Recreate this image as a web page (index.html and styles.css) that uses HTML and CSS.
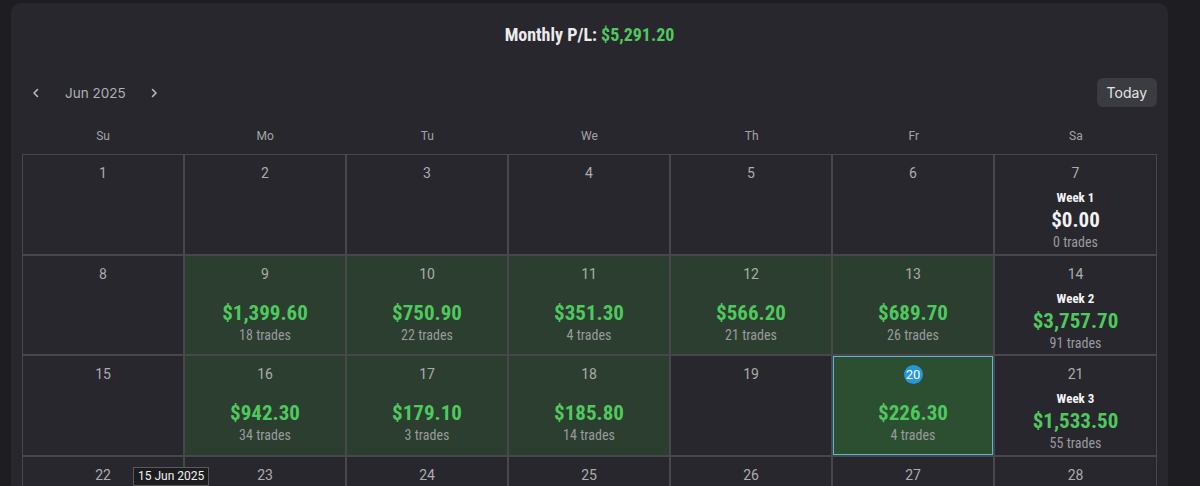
FILE: index.html
```html
<!DOCTYPE html>
<html lang="en">
<head>
    <meta charset="UTF-8">
    <meta name="viewport" content="width=device-width, initial-scale=1.0">
    <title>P/L Calendar</title>
    <link rel="stylesheet" href="styles.css">
</head>
<body>
    <div class="card">
        <h1 class="title">Monthly P/L: <span class="pos">$5,291.20</span></h1>

        <div class="nav">
            <div class="month-switch">
                <button class="arrow" aria-label="Previous month">
                    <svg width="14" height="14" viewBox="0 0 14 14"><path d="M8.5 3.5 5 7l3.5 3.5" fill="none" stroke="currentColor" stroke-width="1.6" stroke-linecap="round" stroke-linejoin="round"/></svg>
                </button>
                <span class="month">Jun 2025</span>
                <button class="arrow" aria-label="Next month">
                    <svg width="14" height="14" viewBox="0 0 14 14"><path d="M5.5 3.5 9 7l-3.5 3.5" fill="none" stroke="currentColor" stroke-width="1.6" stroke-linecap="round" stroke-linejoin="round"/></svg>
                </button>
            </div>
            <button class="today">Today</button>
        </div>

        <div class="weekdays">
            <div>Su</div><div>Mo</div><div>Tu</div><div>We</div><div>Th</div><div>Fr</div><div>Sa</div>
        </div>

        <div class="grid">
            <!-- week 1 -->
            <div class="day"><span class="num">1</span></div>
            <div class="day"><span class="num">2</span></div>
            <div class="day"><span class="num">3</span></div>
            <div class="day"><span class="num">4</span></div>
            <div class="day"><span class="num">5</span></div>
            <div class="day"><span class="num">6</span></div>
            <div class="day week">
                <span class="num">7</span>
                <span class="week-label">Week 1</span>
                <span class="amount zero">$0.00</span>
                <span class="trades">0 trades</span>
            </div>

            <!-- week 2 -->
            <div class="day"><span class="num">8</span></div>
            <div class="day win">
                <span class="num">9</span>
                <span class="amount">$1,399.60</span>
                <span class="trades">18 trades</span>
            </div>
            <div class="day win">
                <span class="num">10</span>
                <span class="amount">$750.90</span>
                <span class="trades">22 trades</span>
            </div>
            <div class="day win">
                <span class="num">11</span>
                <span class="amount">$351.30</span>
                <span class="trades">4 trades</span>
            </div>
            <div class="day win">
                <span class="num">12</span>
                <span class="amount">$566.20</span>
                <span class="trades">21 trades</span>
            </div>
            <div class="day win">
                <span class="num">13</span>
                <span class="amount">$689.70</span>
                <span class="trades">26 trades</span>
            </div>
            <div class="day week">
                <span class="num">14</span>
                <span class="week-label">Week 2</span>
                <span class="amount">$3,757.70</span>
                <span class="trades">91 trades</span>
            </div>

            <!-- week 3 -->
            <div class="day"><span class="num">15</span></div>
            <div class="day win">
                <span class="num">16</span>
                <span class="amount">$942.30</span>
                <span class="trades">34 trades</span>
            </div>
            <div class="day win">
                <span class="num">17</span>
                <span class="amount">$179.10</span>
                <span class="trades">3 trades</span>
            </div>
            <div class="day win">
                <span class="num">18</span>
                <span class="amount">$185.80</span>
                <span class="trades">14 trades</span>
            </div>
            <div class="day"><span class="num">19</span></div>
            <div class="day win selected">
                <span class="num today-badge">20</span>
                <span class="amount">$226.30</span>
                <span class="trades">4 trades</span>
            </div>
            <div class="day week">
                <span class="num">21</span>
                <span class="week-label">Week 3</span>
                <span class="amount">$1,533.50</span>
                <span class="trades">55 trades</span>
            </div>

            <!-- week 4 -->
            <div class="day">
                <span class="num">22</span>
                <span class="tooltip">15 Jun 2025</span>
            </div>
            <div class="day"><span class="num">23</span></div>
            <div class="day"><span class="num">24</span></div>
            <div class="day"><span class="num">25</span></div>
            <div class="day"><span class="num">26</span></div>
            <div class="day"><span class="num">27</span></div>
            <div class="day"><span class="num">28</span></div>
        </div>
    </div>
</body>
</html>
```

FILE: styles.css
```css
body {
    margin: 0;
    padding: 3px 32px 0 11px;
    background-color: #1e1e22;
    font-family: Roboto, "Noto Sans", sans-serif;
    color: #b4b4b8;
    overflow: hidden;
}

.card {
    background-color: #28272d;
    border-radius: 10px;
    padding: 20px 11px 40px;
}

.title {
    margin: 0;
    text-align: center;
    font-size: 18px;
    line-height: 24px;
    font-weight: 700;
    font-stretch: condensed;
    color: #ececee;
}

.pos {
    color: #4fc95d;
}

.nav {
    display: flex;
    justify-content: space-between;
    align-items: center;
    margin-top: 31px;
}

.month-switch {
    display: flex;
    align-items: center;
}

.arrow {
    background: none;
    border: none;
    color: #b8b8bc;
    width: 28px;
    height: 28px;
    padding: 0;
    display: flex;
    align-items: center;
    justify-content: center;
}

.month {
    font-family: Inter, Roboto, sans-serif;
    font-size: 13.5px;
    color: #b0b0b4;
    margin: 0 14px 0 15px;
}

.today {
    background-color: #3b3c41;
    border: none;
    border-radius: 6px;
    color: #e4e4e6;
    font-family: Inter, Roboto, sans-serif;
    font-size: 14px;
    height: 29px;
    padding: 0 10px;
}

.weekdays {
    display: grid;
    grid-template-columns: repeat(7, 1fr);
    margin-top: 14px;
    height: 30px;
    align-items: center;
    font-size: 12px;
    color: #a4a4a8;
    text-align: center;
    margin-bottom: 3px;
}

.grid {
    display: grid;
    grid-template-columns: repeat(7, 1fr);
    border-top: 1px solid #48484c;
    border-left: 1px solid #48484c;
}

.day {
    position: relative;
    height: 100.7px;
    border-right: 2px solid #48484c;
    border-bottom: 2px solid #48484c;
    display: flex;
    flex-direction: column;
    align-items: center;
    padding-top: 8px;
    box-sizing: border-box;
}

.day:nth-child(7n) {
    border-right-width: 1px;
}

.num {
    font-size: 14px;
    line-height: 20px;
    color: #acacb0;
}

.win {
    background-color: #2b3e2f;
}

.win .amount {
    margin-top: 17px;
}

.selected {
    background-color: #2c4f31;
    box-shadow: inset 0 0 0 1px #5ab8d6;
}

.today-badge {
    width: 19px;
    height: 19px;
    line-height: 19px;
    margin-top: 1px;
    text-align: center;
    border-radius: 50%;
    background-color: #2496dc;
    color: #fff;
    font-size: 13px;
}

.amount {
    font-size: 21px;
    line-height: 24px;
    font-weight: 700;
    font-stretch: condensed;
    color: #4fc95d;
}

.amount.zero {
    color: #f2f2f4;
}

.trades {
    font-size: 14px;
    line-height: 20px;
    font-stretch: condensed;
    color: #9a9a9e;
}

.week-label {
    margin-top: 7px;
    font-size: 13px;
    line-height: 16px;
    font-weight: 700;
    font-stretch: condensed;
    color: #f4f4f6;
}

.week .amount {
    margin-top: 2px;
}

.tooltip {
    position: absolute;
    left: 110px;
    top: 10px;
    white-space: nowrap;
    background-color: #1d1d20;
    border: 1px solid #5a5a5e;
    color: #f0f0f2;
    font-size: 12px;
    line-height: 17px;
    padding: 0 4px;
    z-index: 2;
}
```
